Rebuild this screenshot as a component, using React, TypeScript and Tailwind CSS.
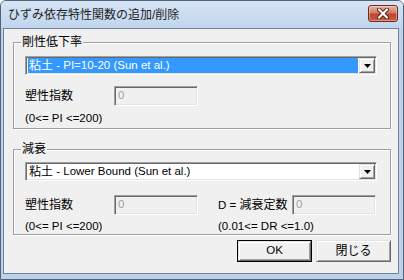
const sunken =
  'border border-t-[#a0a0a0] border-l-[#a0a0a0] border-r-white border-b-white shadow-[inset_1px_1px_0_#696969,inset_-1px_-1px_0_#e3e3e3]';
const raised =
  'border border-t-[#e3e3e3] border-l-[#e3e3e3] border-r-[#696969] border-b-[#696969] shadow-[inset_1px_1px_0_#ffffff,inset_-1px_-1px_0_#a0a0a0]';

function CloseButton() {
  return (
    <div className="mt-[4px] self-start w-[30px] h-[17px] rounded-[3px] border border-[#6b2c20] bg-[linear-gradient(#eab3a3,#d07a63_45%,#c0452e_55%,#c85c40)] shadow-[inset_0_0_0_1px_rgba(255,255,255,0.35)] flex items-center justify-center">
      <svg width="14" height="11" viewBox="0 0 14 11">
        <path d="M3 1.5 L11 9.5 M11 1.5 L3 9.5" stroke="#5a1e12" strokeWidth="4" strokeLinecap="round" />
        <path d="M3 1.5 L11 9.5 M11 1.5 L3 9.5" stroke="#ffffff" strokeWidth="2.2" strokeLinecap="round" />
      </svg>
    </div>
  );
}

function DropButton() {
  return (
    <div className={`w-[16px] my-[1px] mr-[1px] bg-[#f0f0f0] flex items-center justify-center ${raised}`}>
      <svg width="7" height="4" viewBox="0 0 7 4">
        <polygon points="0,0 7,0 3.5,4" fill="#000000" />
      </svg>
    </div>
  );
}

function Combo({ selected, children }: { selected?: boolean; children: React.ReactNode }) {
  return (
    <div className={`ml-[11px] w-[352px] h-[19px] flex bg-white ${sunken}`}>
      <div
        className={`flex-1 m-[1px] ml-[2px] mr-[1px] pl-[1px] flex items-center text-[11.5px] leading-none whitespace-nowrap ${
          selected ? 'bg-[#3399ff] text-white' : 'text-black'
        }`}
      >
        {children}
      </div>
      <DropButton />
    </div>
  );
}

function Field() {
  return (
    <div className={`w-[84px] h-[20px] bg-[#f0f0f0] flex items-center pl-[3px] text-[11.5px] text-[#a0a0a0] ${sunken}`}>
      0
    </div>
  );
}

function GroupLabel({ children }: { children: React.ReactNode }) {
  return (
    <div className="-mt-[9px] ml-[7px] px-[1px] w-fit bg-[#f0f0f0] text-[12px] leading-[16px] text-black">
      {children}
    </div>
  );
}

export default function App() {
  return (
    <div className="w-[404px] h-[280px] font-['Liberation_Sans','Noto_Sans_CJK_JP',sans-serif] text-black">
      <div className="w-full h-full flex flex-col rounded-t-[6px] border border-[#4f6277] bg-[#bcd2eb] overflow-hidden">
        <div className="h-[27px] flex items-center pl-[7px] pr-[5px] bg-[linear-gradient(#d6e4f5,#c0d5ed)]">
          <span className="flex-1 text-[12px] leading-none text-[#1e1e1e]">ひずみ依存特性関数の追加/削除</span>
          <CloseButton />
        </div>
        <div className="flex-1 ml-[2px] mr-[4px] mb-[5px] border border-[#6f8298] bg-[#f0f0f0] pl-[9px] pr-[7px] pt-[13px] flex flex-col">
          <div className="border border-[#a0a0a0] shadow-[inset_1px_1px_0_#ffffff,1px_1px_0_#ffffff] pb-[3px]">
            <GroupLabel>剛性低下率</GroupLabel>
            <div className="mt-[6px]">
              <Combo selected>
                <span className="text-[12px]">粘土</span>
                <span>&nbsp;- PI=10-20 (Sun et al.)</span>
              </Combo>
            </div>
            <div className="mt-[11px] ml-[11px] flex items-center">
              <span className="w-[89px] text-[12px] leading-[16px]">塑性指数</span>
              <Field />
            </div>
            <div className="mt-[5px] ml-[11px] text-[11.5px] leading-[14px]">(0&lt;= PI &lt;=200)</div>
          </div>

          <div className="mt-[20px] border border-[#a0a0a0] shadow-[inset_1px_1px_0_#ffffff,1px_1px_0_#ffffff] pb-[1px]">
            <GroupLabel>減衰</GroupLabel>
            <div className="mt-[5px]">
              <Combo>
                <span className="text-[12px]">粘土</span>
                <span>&nbsp;- Lower Bound (Sun et al.)</span>
              </Combo>
            </div>
            <div className="mt-[14px] ml-[11px] flex items-center">
              <span className="w-[89px] text-[12px] leading-[16px]">塑性指数</span>
              <Field />
              <span className="ml-[20px] w-[74px] text-[11.5px] leading-[16px] whitespace-nowrap">
                D = <span className="text-[12px]">減衰定数</span>
              </span>
              <Field />
            </div>
            <div className="mt-[4px] ml-[11px] flex text-[11.5px] leading-[14px]">
              <span className="w-[193px]">(0&lt;= PI &lt;=200)</span>
              <span>(0.01&lt;= DR &lt;=1.0)</span>
            </div>
          </div>

          <div className="mt-[5px] flex justify-end gap-[4px]">
            <button className="w-[75px] h-[22px] border border-black bg-[#f0f0f0] flex">
              <span className={`flex-1 flex items-center justify-center text-[11.5px] ${raised}`}>OK</span>
            </button>
            <button className={`w-[75px] h-[22px] bg-[#f0f0f0] flex items-center justify-center text-[12px] ${raised}`}>
              閉じる
            </button>
          </div>
        </div>
      </div>
    </div>
  );
}
